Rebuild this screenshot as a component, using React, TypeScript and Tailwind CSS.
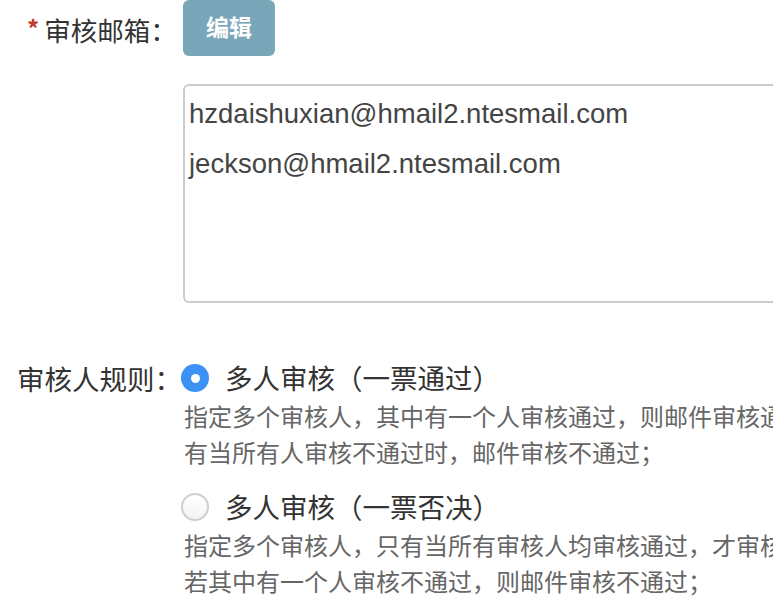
import React from 'react';

const cjk = "font-['Noto_Sans_CJK_SC',sans-serif]";

interface RuleOption {
  title: string;
  lines: string[];
  checked: boolean;
}

const options: RuleOption[] = [
  {
    title: '多人审核（一票通过）',
    lines: [
      '指定多个审核人，其中有一个人审核通过，则邮件审核通过；只',
      '有当所有人审核不通过时，邮件审核不通过；',
    ],
    checked: true,
  },
  {
    title: '多人审核（一票否决）',
    lines: [
      '指定多个审核人，只有当所有审核人均审核通过，才审核通过；',
      '若其中有一个人审核不通过，则邮件审核不通过；',
    ],
    checked: false,
  },
];

const emails = ['hzdaishuxian@hmail2.ntesmail.com', 'jeckson@hmail2.ntesmail.com'];

const Radio: React.FC<{ checked: boolean }> = ({ checked }) =>
  checked ? (
    <span className="w-[28px] h-[28px] rounded-full bg-[#3b91f4] flex items-center justify-center shrink-0">
      <span className="w-[9px] h-[9px] rounded-full bg-white" />
    </span>
  ) : (
    <span className="w-[28px] h-[28px] rounded-full border-2 border-[#cfcfcf] bg-gradient-to-b from-white to-[#f3f3f3] shrink-0" />
  );

const App: React.FC = () => {
  return (
    <div className={`w-[773px] h-[601px] overflow-hidden bg-white ${cjk}`}>
      {/* 审核邮箱 */}
      <div className="flex items-center h-[56px]">
        <div className="w-[172px] pl-[27px] text-[26.5px] leading-none text-[#333] pt-[4px] whitespace-nowrap">
          <span className="text-[#c0392b] text-[24px] font-bold mr-[5px] relative -top-[3px]">*</span>
          审核邮箱：
        </div>
        <button className="ml-[11px] w-[92px] h-[56px] rounded-[6px] bg-[#79a7b9] text-white font-bold text-[23px] leading-none pb-[4px]">
          编辑
        </button>
      </div>

      <div className="ml-[183px] mt-[28px] w-[700px] h-[219px] border-2 border-[#cccccc] rounded-[6px] px-[4px] pt-[3px] font-['Liberation_Sans',Arial,sans-serif] text-[27.5px] leading-[50px] text-[#444]">
        {emails.map((e) => (
          <div key={e} className="whitespace-nowrap">{e}</div>
        ))}
      </div>

      {/* 审核人规则 */}
      <div className="flex mt-[55px]">
        <div className="w-[172px] shrink-0 pl-[17px] text-[27.5px] leading-[40px] text-[#333] whitespace-nowrap">
          审核人规则：
        </div>
        <div className="flex flex-col ml-[9px] gap-[17px]">
          {options.map((o) => (
            <div key={o.title}>
              <div className="flex items-center h-[40px]">
                <Radio checked={o.checked} />
                <span className="ml-[16px] text-[27.5px] text-[#333] whitespace-nowrap">{o.title}</span>
              </div>
              <div className="ml-[3px] text-[24px] leading-[36px] text-[#666]">
                {o.lines.map((l) => (
                  <div key={l} className="whitespace-nowrap">{l}</div>
                ))}
              </div>
            </div>
          ))}
        </div>
      </div>
    </div>
  );
};

export default App;
